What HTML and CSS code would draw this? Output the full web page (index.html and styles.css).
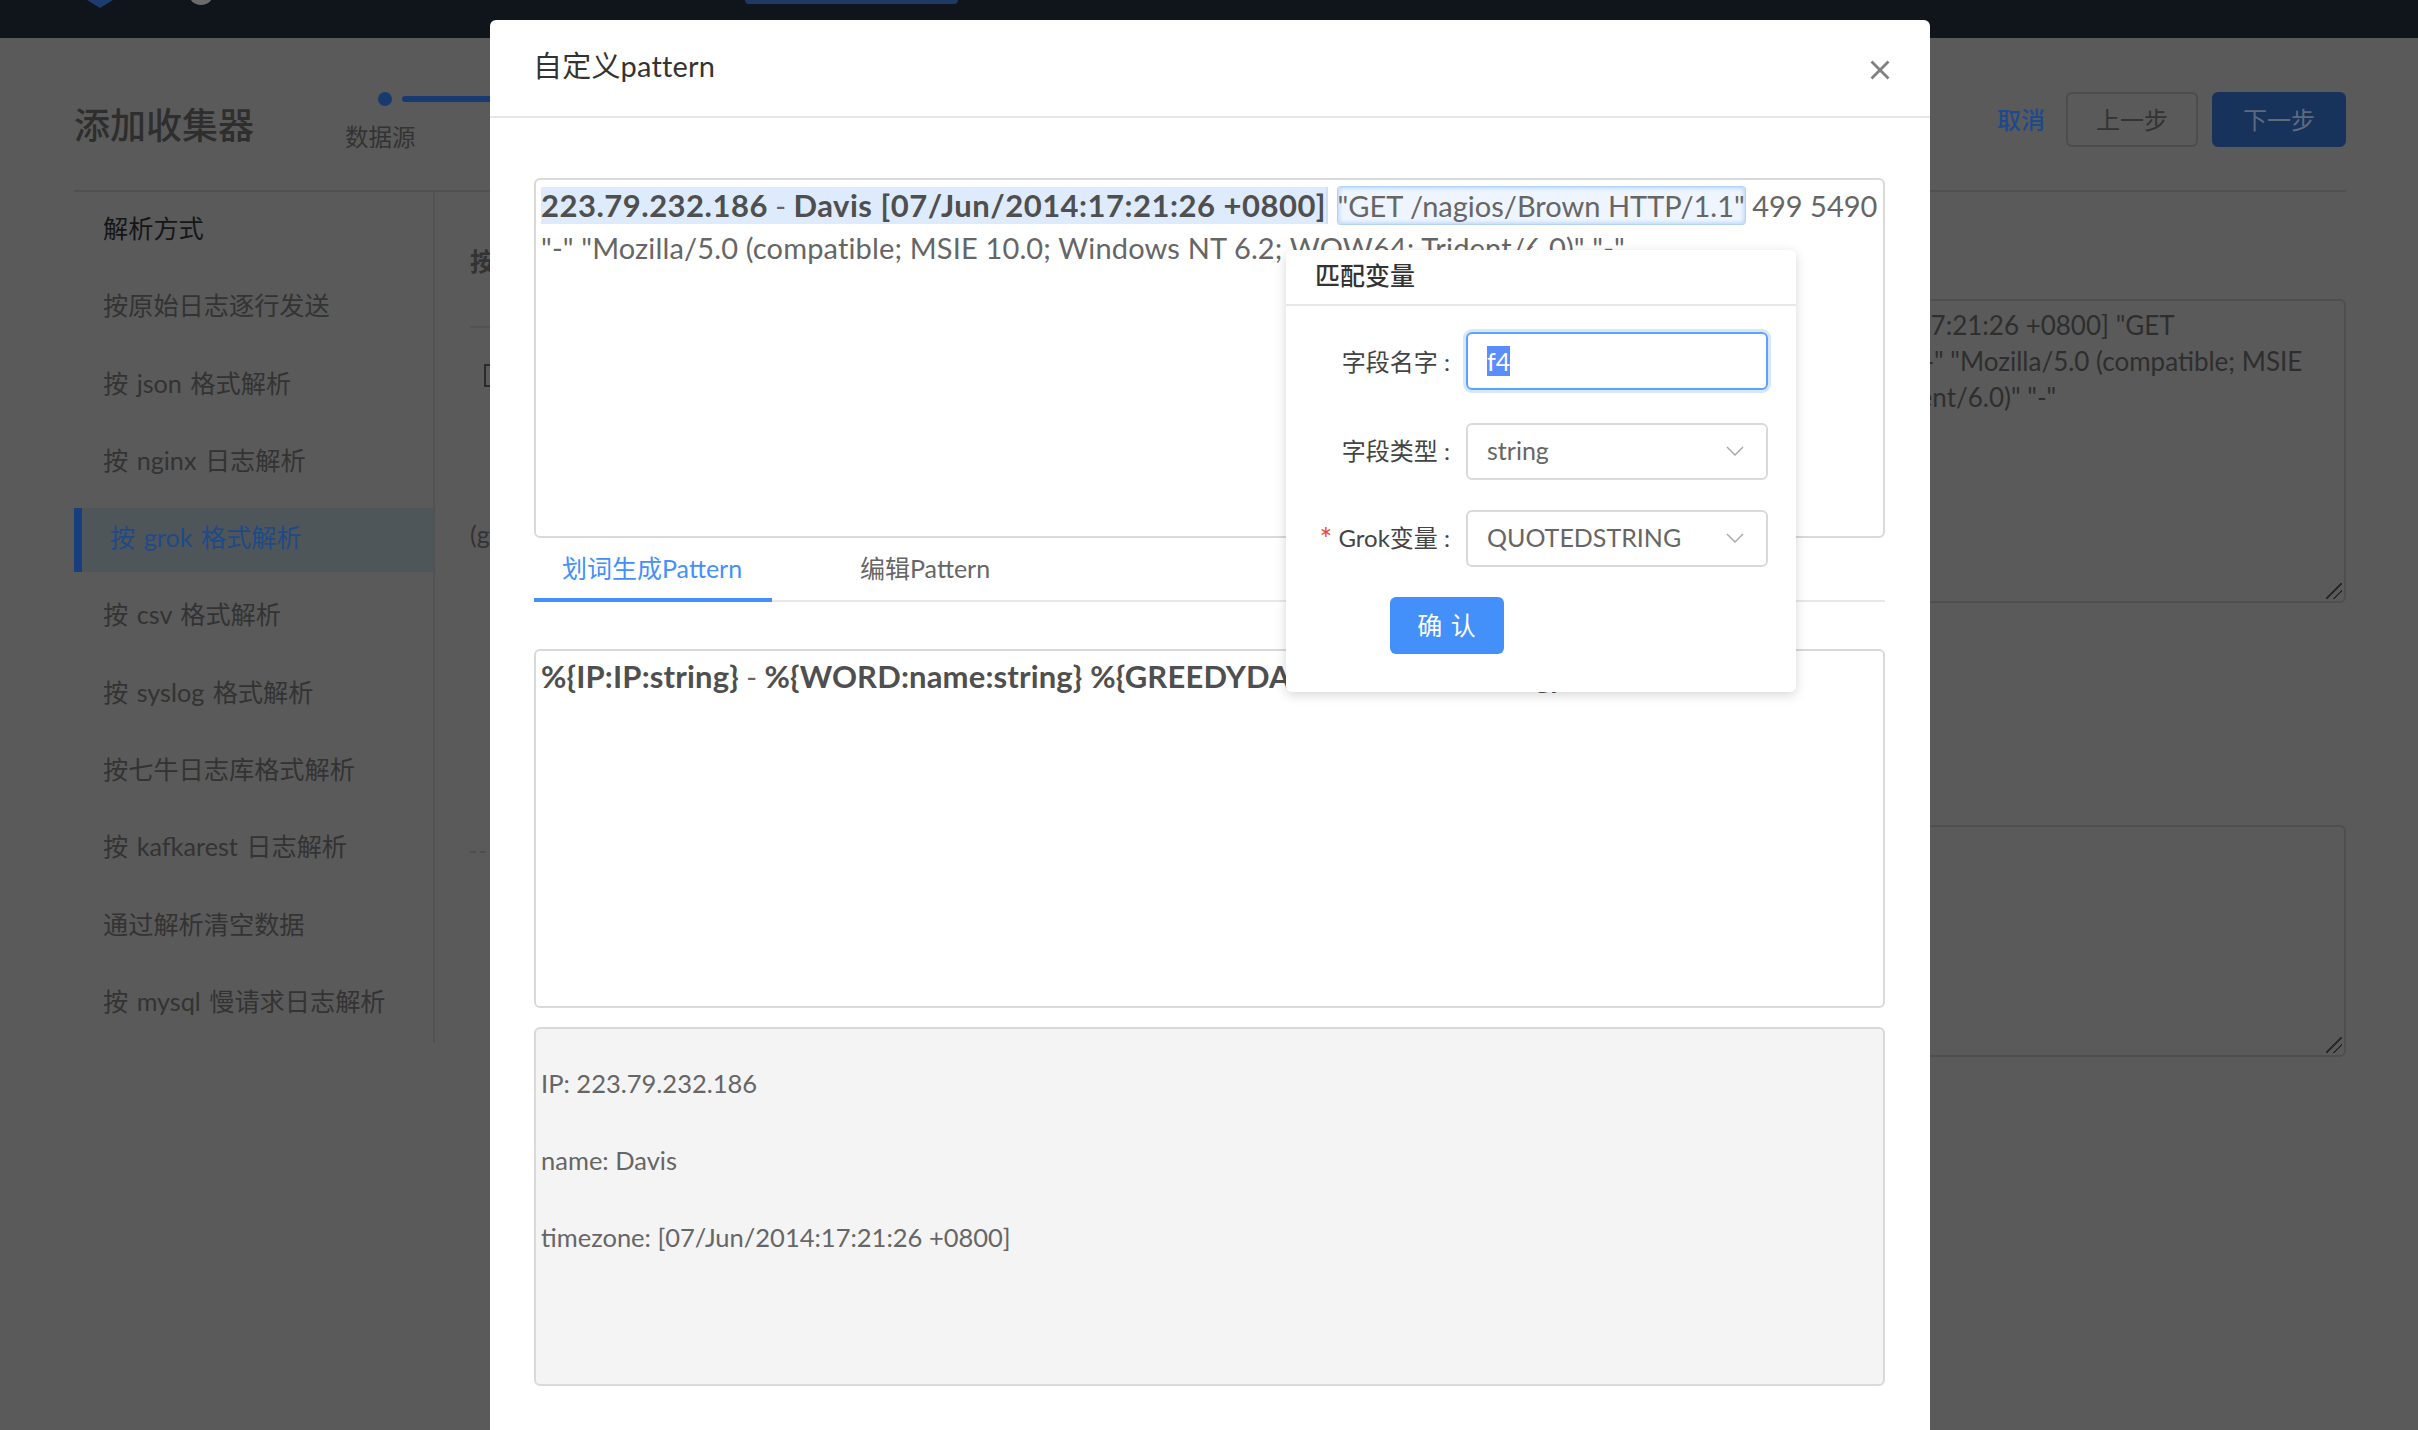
FILE: index.html
```html
<!DOCTYPE html>
<html lang="zh-CN">
<head>
  <meta charset="UTF-8">
  <title>添加收集器</title>
  <link rel="stylesheet" href="styles.css">
</head>
<body>
  <div class="topbar">
    <svg class="top-logo" width="26" height="8" viewBox="0 0 26 8"><path d="M0 0H26L13 8Z" fill="#1c3d70"/></svg>
    <svg class="top-avatar" width="26" height="5" viewBox="0 0 26 5"><circle cx="13" cy="-8" r="13" fill="#6b6b6b"/></svg>
    <div class="top-tab"></div>
  </div>

  <div class="page-head">
    <h1 class="page-title">添加收集器</h1>
    <div class="steps">
      <div class="step-track">
        <span class="step-dot"></span>
        <span class="step-line"></span>
      </div>
      <div class="step-label">数据源</div>
    </div>
    <div class="head-actions">
      <a class="link-cancel">取消</a>
      <button class="page-btn">上一步</button>
      <button class="page-btn page-btn-primary">下一步</button>
    </div>
  </div>

  <div class="page-main">
    <ul class="side-menu">
      <li class="side-title">解析方式</li>
      <li>按原始日志逐行发送</li>
      <li>按 json 格式解析</li>
      <li>按 nginx 日志解析</li>
      <li class="active">按 grok 格式解析</li>
      <li>按 csv 格式解析</li>
      <li>按 syslog 格式解析</li>
      <li>按七牛日志库格式解析</li>
      <li>按 kafkarest 日志解析</li>
      <li>通过解析清空数据</li>
      <li>按 mysql 慢请求日志解析</li>
    </ul>
    <div class="form-col">
      <h2 class="form-heading">按 grok 格式解析</h2>
      <div class="form-check"></div>
      <div class="form-hint">(grok pattern)</div>
      <div class="form-dash"></div>
    </div>
    <div class="preview-col">
      <div class="page-area area-sample">223.79.232.186 - Davis [07/Jun/2014:17:21:26 +0800] "GET<br>/nagios/Brown HTTP/1.1" 499 5490 "-" "Mozilla/5.0 (compatible; MSIE<br>10.0; Windows NT 6.2; WOW64; Trident/6.0)" "-"<span class="resize-mark"></span></div>
      <div class="page-area area-result"><span class="resize-mark"></span></div>
    </div>
  </div>

  <div class="modal">
    <div class="modal-head">
      <div class="modal-title">自定义pattern</div>
      <svg class="modal-close" width="20" height="20" viewBox="0 0 20 20"><path d="M1.5 1.5L18.5 18.5M18.5 1.5L1.5 18.5" stroke="#808080" stroke-width="2.8" fill="none"/></svg>
    </div>
    <div class="modal-body">
      <div class="box box-log">
        <div class="log-line"><span class="tok tok-done"><b>223.79.232.186</b> - <b>Davis [07/Jun/2014:17:21:26 +0800]</b></span> <span class="tok tok-picked">"GET /nagios/Brown HTTP/1.1"</span> 499 5490</div>
        <div class="log-line log-rest">"-" "Mozilla/5.0 (compatible; MSIE 10.0; Windows NT 6.2; WOW64; Trident/6.0)" "-"</div>
      </div>
      <div class="tabs">
        <div class="tab tab-active">划词生成Pattern</div>
        <div class="tab">编辑Pattern</div>
      </div>
      <div class="box box-pattern"><b>%{IP:IP:string}</b> - <b>%{WORD:name:string} %{GREEDYDATA:timezone:string}</b></div>
      <div class="box box-result">
        <p>IP: 223.79.232.186</p>
        <p>name: Davis</p>
        <p>timezone: [07/Jun/2014:17:21:26 +0800]</p>
      </div>
    </div>

    <div class="popover">
      <span class="popover-arrow"></span>
      <div class="popover-title">匹配变量</div>
      <div class="popover-form">
        <div class="field-row field-focused">
          <label class="field-label">字段名字 :</label>
          <div class="field-input input-focus"><span class="text-selected">f4</span></div>
        </div>
        <div class="field-row">
          <label class="field-label">字段类型 :</label>
          <div class="field-input"><span class="field-value">string</span>
            <svg class="chevron" width="18" height="10" viewBox="0 0 18 10"><path d="M1 1L9 9L17 1" stroke="#a6a6a6" stroke-width="1.4" fill="none"/></svg>
          </div>
        </div>
        <div class="field-row">
          <label class="field-label"><span class="required">*</span> Grok变量 :</label>
          <div class="field-input"><span class="field-value">QUOTEDSTRING</span>
            <svg class="chevron" width="18" height="10" viewBox="0 0 18 10"><path d="M1 1L9 9L17 1" stroke="#a6a6a6" stroke-width="1.4" fill="none"/></svg>
          </div>
        </div>
        <button class="btn-confirm">确 认</button>
      </div>
    </div>
  </div>
</body>
</html>
```

FILE: styles.css
```css
* {
  box-sizing: border-box;
}

body {
  width: 2418px;
  height: 1430px;
  margin: 0;
  overflow: hidden;
  position: relative;
  background-color: #5a5a5a;
  color: #2f2f2f;
  font-family: Lato, "Noto Sans CJK SC", sans-serif;
  font-size: 25px;
}

/* Top bar, mostly cut off by the window */
.topbar {
  height: 38px;
  display: flex;
  align-items: flex-start;
  padding-left: 87px;
  background-color: #10141b;
}

.top-avatar {
  margin-left: 75px;
}

.top-tab {
  width: 213px;
  height: 4px;
  margin-left: 531px;
  background-color: #1c3a63;
  border-radius: 0 0 6px 6px;
}

/* Page behind the mask */
.page-head {
  height: 154px;
  margin: 0 72px 0 74px;
  display: flex;
  align-items: flex-start;
  border-bottom: 2px solid #505050;
}

.page-title {
  margin: 65px 0 0;
  width: 180px;
  font-size: 36px;
  font-weight: 500;
  line-height: 44px;
  color: #2e2e2e;
  white-space: nowrap;
}

.steps {
  margin: 54px 0 0 91px;
}

.step-track {
  display: flex;
  align-items: center;
  padding-left: 33px;
}

.step-dot {
  width: 14px;
  height: 14px;
  border-radius: 50%;
  background-color: #173a70;
}

.step-line {
  width: 120px;
  height: 6px;
  margin-left: 10px;
  border-radius: 3px;
  background-color: #173a70;
}

.step-label {
  margin-top: 15px;
  font-size: 23.5px;
  line-height: 32px;
  color: #333;
}

.head-actions {
  margin: 54px 0 0 auto;
  display: flex;
  align-items: center;
}

.link-cancel {
  padding-bottom: 3px;
  font-size: 24px;
  font-weight: 500;
  color: #1d4a8c;
  margin-right: 21px;
}

.page-btn {
  width: 132px;
  height: 55px;
  margin-right: 14px;
  padding-bottom: 3px;
  border: 2px solid #4c4c4c;
  border-radius: 6px;
  background: transparent;
  color: #333;
  font-family: inherit;
  font-size: 24px;
}

.page-btn-primary {
  width: 134px;
  margin-right: 0;
  border-color: #17335c;
  background-color: #17335c;
  color: #5f6b7c;
}

.page-main {
  display: flex;
  margin-left: 74px;
  margin-right: 72px;
}

.side-menu {
  width: 361px;
  margin: 0;
  padding: 7px 0 7px;
  align-self: flex-start;
  list-style: none;
  display: flex;
  flex-direction: column;
  gap: 13.3px;
  border-right: 2px solid #525252;
  font-size: 25.2px;
  word-spacing: 2px;
  color: #333;
}

.side-menu li {
  height: 64px;
  line-height: 58px;
  padding-left: 29px;
}

.side-menu .side-title {
  color: #161616;
}

.side-menu .active {
  padding-left: 28px;
  border-left: 8px solid #173f7d;
  background-color: #4f5659;
  color: #1f4a86;
}

.form-col {
  flex: 1;
  padding-left: 35px;
  color: #333;
}

.form-heading {
  margin: 49px 0 0;
  padding-bottom: 47px;
  height: 87px;
  line-height: 40px;
  font-size: 25px;
  border-bottom: 2px solid #525252;
  white-space: nowrap;
}

.form-check {
  width: 24px;
  height: 23px;
  margin: 36px 0 0 14px;
  border: 2px solid #2b2b2b;
}

.form-hint {
  margin-top: 129px;
  line-height: 36px;
}

.form-dash {
  margin-top: 299px;
  border-top: 2px dashed #4f4f4f;
}

.preview-col {
  width: 879px;
}

.page-area {
  position: relative;
  padding: 6px 30px 0 20px;
  border: 2px solid #4f4f4f;
  border-radius: 6px;
  font-size: 26px;
  line-height: 36px;
  white-space: nowrap;
  color: #2e2e2e;
}

.area-sample {
  height: 304px;
  margin-top: 107px;
  text-indent: -17px;
}

.area-result {
  height: 232px;
  margin-top: 222px;
}

.resize-mark {
  position: absolute;
  right: 2px;
  bottom: 2px;
  width: 16px;
  height: 16px;
  background: linear-gradient(135deg, transparent 46%, #2a2a2a 46%, #2a2a2a 54%, transparent 54%, transparent 70%, #2a2a2a 70%, #2a2a2a 76%, transparent 76%);
}

/* Modal */
.modal {
  position: absolute;
  left: 490px;
  top: 20px;
  bottom: 0;
  width: 1440px;
  background-color: #fff;
  border-radius: 6px 6px 0 0;
}

.modal-head {
  height: 98px;
  padding: 0 40px 0 43px;
  display: flex;
  justify-content: space-between;
  align-items: center;
  border-bottom: 2px solid #e8e8e8;
}

.modal-title {
  margin-top: -8px;
  font-size: 29px;
  letter-spacing: 0.2px;
  color: #333;
}

.modal-close {
  margin-top: 3px;
}

.modal-body {
  padding: 60px 45px 0 44px;
  color: #666;
}

.box {
  padding: 0 5px;
  border: 2px solid #d9d9d9;
  border-radius: 6px;
  font-size: 29px;
  line-height: 43px;
}

.box b {
  color: #4f4f4f;
  font-size: 31px;
  letter-spacing: 0.5px;
}

.box-log {
  height: 360px;
  padding-top: 4px;
}

.log-line {
  white-space: nowrap;
}

.log-rest {
  margin-top: -1px;
  letter-spacing: 0.15px;
}

.tok {
  padding: 1px 0;
}

.tok-done {
  background-color: #deebfc;
  border-right: 2px solid #cfdff5;
}

.tok-picked {
  margin-left: 2px;
  border-radius: 3px;
  background-color: #eef5fe;
  box-shadow: inset 0 0 4px 1px #b4d2f7, 0 0 0 1px #b4d2f7;
}

.tabs {
  height: 64px;
  display: flex;
  border-bottom: 2px solid #e8e8e8;
  font-size: 25px;
}

.tab {
  padding: 10px 28px 0;
  line-height: 40px;
  margin-right: 60px;
  color: #666;
}

.tab-active {
  width: 238px;
  height: 64px;
  border-bottom: 4px solid #4390fb;
  color: #4390fb;
}

.box-pattern {
  height: 359px;
  margin-top: 47px;
  padding-top: 4px;
}

.box-pattern b {
  letter-spacing: 0.15px;
}

.box-result {
  height: 359px;
  margin-top: 19px;
  padding-top: 33px;
  background-color: #f4f4f4;
  font-size: 25.5px;
}

.box-result p {
  margin: 0 0 34px;
}

/* Popover over the modal */
.popover {
  position: absolute;
  left: 796px;
  top: 230px;
  width: 510px;
  height: 442px;
  background-color: #fff;
  border-radius: 6px;
  box-shadow: 0 3px 12px rgba(0, 0, 0, 0.16);
}

.popover-arrow {
  position: absolute;
  left: 246px;
  top: -7px;
  width: 16px;
  height: 16px;
  background-color: #fff;
  transform: rotate(45deg);
}

.popover-title {
  position: relative;
  height: 56px;
  padding-left: 29px;
  line-height: 50px;
  font-weight: 500;
  color: #333;
  border-bottom: 2px solid #e8e8e8;
}

.popover-form {
  padding-top: 26px;
}

.field-row {
  height: 57px;
  margin-bottom: 30px;
  display: flex;
  align-items: center;
}

.field-focused {
  height: 58px;
  margin-bottom: 33px;
}

.field-label {
  width: 164px;
  padding-bottom: 4px;
  text-align: right;
  font-size: 24px;
  color: #444;
  white-space: nowrap;
}

.field-focused .field-label {
  padding-bottom: 1px;
}

.required {
  position: relative;
  top: 3px;
  font-size: 30px;
  line-height: 20px;
  color: #f04134;
}

.field-input {
  width: 302px;
  height: 100%;
  margin-left: 16px;
  padding: 0 22px 0 19px;
  display: flex;
  align-items: center;
  justify-content: space-between;
  border: 2px solid #d9d9d9;
  border-radius: 6px;
  color: #666;
}

.field-value {
  padding-bottom: 3px;
}

.chevron {
  margin-top: -1px;
}

.input-focus {
  justify-content: flex-start;
  border-color: #5aa2fb;
  box-shadow: 0 0 0 3px #d6e7fe;
}

.text-selected {
  height: 30px;
  line-height: 30px;
  background-color: #5b8dfb;
  color: #fff;
}

.btn-confirm {
  display: block;
  width: 114px;
  height: 57px;
  margin: 3px 0 0 104px;
  padding-bottom: 5px;
  border: 0;
  border-radius: 6px;
  background-color: #4390fb;
  color: #fff;
  font-family: inherit;
  font-size: 25px;
  letter-spacing: 1px;
}
```
